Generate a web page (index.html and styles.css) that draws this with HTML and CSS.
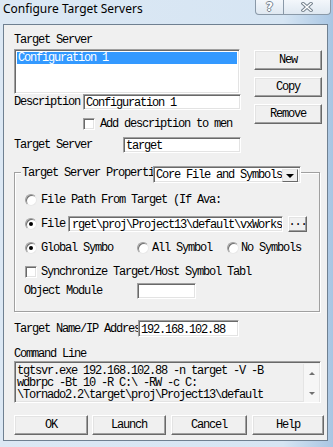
FILE: index.html
```html
<!DOCTYPE html>
<html lang="en">
<head>
    <meta charset="UTF-8">
    <title>Configure Target Servers</title>
    <link rel="stylesheet" href="styles.css">
</head>
<body>

    <div class="titlebar">
        <span class="title">Configure Target Servers</span>
        <div class="caption">
            <span class="cap-btn cap-help">?</span>
            <span class="cap-btn cap-close">
                <svg width="12" height="10" viewBox="0 0 12 10">
                    <path d="M2 1.5 L10 8.5 M10 1.5 L2 8.5" stroke="#76838f" stroke-width="3.4" stroke-linecap="square" fill="none"/>
                    <path d="M2 1.5 L10 8.5 M10 1.5 L2 8.5" stroke="#fff" stroke-width="1.4" stroke-linecap="square" fill="none"/>
                </svg>
            </span>
        </div>
    </div>

    <div class="client">
        <div class="text-line">Target Server</div>

        <div class="top">
            <div class="top-left">
                <div class="listbox sunken">
                    <div class="list-item selected">Configuration 1</div>
                </div>
                <div class="row">
                    <span class="lbl lbl-desc">Description</span>
                    <div class="field sunken field-desc">Configuration 1</div>
                </div>
                <div class="row row-check">
                    <span class="checkbox sunken"></span>
                    <span class="check-text">Add description to men</span>
                </div>
                <div class="row row-server">
                    <span class="lbl lbl-server">Target Server</span>
                    <div class="field sunken field-server">target</div>
                </div>
            </div>
            <div class="side-btns">
                <button class="btn btn-side">New</button>
                <button class="btn btn-side">Copy</button>
                <button class="btn btn-side">Remove</button>
            </div>
        </div>

        <div class="group">
            <div class="group-head">
                <span class="group-title">Target Server Properti</span>
                <div class="combo sunken">
                    <span class="combo-text">Core File and Symbols</span>
                    <span class="combo-btn"><span class="arrow-down"></span></span>
                </div>
            </div>

            <div class="opt-row opt-first">
                <span class="radio"></span>
                <span class="opt-text opt-path">File Path From Target (If Ava:</span>
            </div>
            <div class="opt-row">
                <span class="radio on"></span>
                <span class="opt-text opt-file">File</span>
                <div class="field sunken field-file">rget\proj\Project13\default\vxWorks</div>
                <button class="btn btn-dots">...</button>
            </div>
            <div class="opt-row">
                <span class="radio on"></span>
                <span class="opt-text opt-global">Global Symbo</span>
                <span class="radio"></span>
                <span class="opt-text opt-all">All Symbol</span>
                <span class="radio"></span>
                <span class="opt-text opt-none">No Symbols</span>
            </div>
            <div class="opt-row">
                <span class="checkbox sunken"></span>
                <span class="opt-text opt-sync">Synchronize Target/Host Symbol Tabl</span>
            </div>
            <div class="opt-row opt-module">
                <span class="lbl lbl-module">Object Module</span>
                <div class="field sunken field-module"></div>
            </div>
        </div>

        <div class="row row-ip">
            <span class="lbl lbl-ip">Target Name/IP Addres</span>
            <div class="field sunken field-ip">192.168.102.88</div>
        </div>

        <div class="text-line cmd-label">Command Line</div>
        <div class="cmd sunken">
            <div class="cmd-text">tgtsvr.exe 192.168.102.88 -n target -V -B
wdbrpc -Bt 10 -R C:\ -RW -c C:
\Tornado2.2\target\proj\Project13\default</div>
            <div class="vscroll">
                <span class="sb-arrow sb-up"></span>
                <span class="sb-arrow sb-down"></span>
            </div>
        </div>

        <div class="actions">
            <button class="btn btn-ok">OK</button>
            <button class="btn btn-launch">Launch</button>
            <button class="btn btn-cancel">Cancel</button>
            <button class="btn btn-help">Help</button>
        </div>
    </div>

</body>
</html>
```

FILE: styles.css
```css
body {
    margin: 0;
    width: 333px;
    height: 447px;
    overflow: hidden;
    background: linear-gradient(to right, #dce8f4 0%, #d6e5f3 85%, #a9c6e3 100%);
    font-family: "Liberation Mono", monospace;
    font-size: 12px;
    letter-spacing: -1.2px;
    color: #000;
}

/* title bar */
.titlebar {
    height: 24px;
    display: flex;
    justify-content: space-between;
    align-items: flex-start;
}

.title {
    font-family: "Noto Sans", sans-serif;
    font-size: 12px;
    letter-spacing: 0;
    line-height: 16px;
    padding: 1px 0 0 3px;
}

.caption {
    display: flex;
    height: 14px;
    margin-right: 2px;
    border: 1px solid #8a99a8;
    border-top: 0;
    border-radius: 0 0 4px 4px;
    background: linear-gradient(#f3f7fb, #dfe8f1);
}

.cap-btn {
    display: flex;
    align-items: center;
    justify-content: center;
}

.cap-help {
    width: 27px;
    border-right: 1px solid #8a99a8;
    font-family: "DejaVu Sans", sans-serif;
    font-size: 12px;
    font-weight: bold;
    letter-spacing: 0;
    color: #fff;
    text-shadow: 1px 0 #76838f, -1px 0 #76838f, 0 1px #76838f, 0 -1px #76838f;
}

.cap-close {
    width: 46px;
}

/* dialog body */
.client {
    margin-left: 3px;
    width: 325px;
    height: 417px;
    box-sizing: border-box;
    border: 1px solid #6f8091;
    background: #f0f0f0;
    padding: 9px 0 0 10px;
}

.text-line {
    line-height: 12px;
    white-space: nowrap;
}

.sunken {
    box-sizing: border-box;
    border: 1px solid;
    border-color: #a0a0a0 #fff #fff #a0a0a0;
    box-shadow: inset 1px 1px #696969, inset -1px -1px #e3e3e3;
}

.btn {
    box-sizing: border-box;
    height: 20px;
    padding: 0;
    background: #f0f0f0;
    border: 1px solid;
    border-color: #fff #696969 #696969 #fff;
    box-shadow: inset -1px -1px #a0a0a0, inset 1px 1px #e3e3e3;
    font: inherit;
    letter-spacing: inherit;
    color: #000;
    display: flex;
    align-items: center;
    justify-content: center;
}

.row {
    display: flex;
    align-items: center;
    height: 16px;
}

.lbl {
    line-height: 12px;
    white-space: nowrap;
}

.field {
    height: 16px;
    background: #fff;
    padding: 2px 2px 0;
    line-height: 12px;
    white-space: nowrap;
    overflow: hidden;
}

/* top section */
.top {
    display: flex;
    margin-top: 3px;
}

.top-left {
    width: 227px;
}

.listbox {
    width: 226px;
    height: 45px;
    background: #fff;
    padding: 2px;
}

.list-item {
    height: 12px;
    line-height: 12px;
    padding-left: 1px;
}

.list-item.selected {
    background: #3399ff;
    color: #fff;
}

.lbl-desc {
    width: 69px;
}

.field-desc {
    width: 158px;
}

.row-check {
    height: 12px;
    margin-top: 8px;
    padding-left: 69px;
}

.checkbox {
    width: 12px;
    height: 12px;
    flex: none;
    background: #fff;
}

.check-text {
    margin-left: 5px;
    line-height: 12px;
    white-space: nowrap;
}

.row-server {
    margin-top: 7px;
}

.lbl-server {
    width: 109px;
}

.field-server {
    width: 118px;
}

.side-btns {
    display: flex;
    flex-direction: column;
    gap: 7px;
    margin: 1px 0 0 13px;
}

.btn-side {
    width: 68px;
}

/* properties group */
.group {
    width: 306px;
    box-sizing: border-box;
    margin-top: 19px;
    padding: 0 0 12px 10px;
    border: 1px solid #a0a0a0;
    box-shadow: inset 1px 1px #fff, 1px 1px #fff;
}

.group-head {
    display: flex;
    margin: -7px 0 0 -4px;
}

.group-title {
    width: 131px;
    padding: 1px 0 0 1px;
    line-height: 12px;
    height: 13px;
    background: #f0f0f0;
    white-space: nowrap;
}

.combo {
    display: flex;
    width: 148px;
    height: 17px;
    background: #fff;
    padding: 2px 2px 2px 1px;
}

.combo-text {
    flex: 1;
    padding-left: 1px;
    line-height: 13px;
    white-space: nowrap;
}

.combo-btn {
    box-sizing: border-box;
    width: 16px;
    height: 13px;
    flex: none;
    background: #f0f0f0;
    border: 1px solid;
    border-color: #e3e3e3 #696969 #696969 #e3e3e3;
    display: flex;
    align-items: center;
    justify-content: center;
}

.arrow-down {
    width: 0;
    height: 0;
    border-left: 4px solid transparent;
    border-right: 4px solid transparent;
    border-top: 4px solid #000;
}

.opt-row {
    display: flex;
    align-items: center;
    height: 16px;
    margin-top: 8px;
}

.opt-first {
    margin-top: 9px;
}

.opt-module {
    margin-top: 3px;
}

.radio {
    width: 12px;
    height: 12px;
    flex: none;
    box-sizing: border-box;
    border-radius: 50%;
    background: #fff;
    border: 1px solid;
    border-color: #a0a0a0 #e8e8e8 #e8e8e8 #a0a0a0;
    box-shadow: inset 1px 1px #707070;
    display: flex;
    align-items: center;
    justify-content: center;
}

.radio.on::after {
    content: "";
    width: 4px;
    height: 4px;
    border-radius: 50%;
    background: #000;
}

.opt-text {
    margin-left: 4px;
    line-height: 12px;
    white-space: nowrap;
}

.opt-path {
    width: 180px;
}

.opt-file {
    width: 27px;
}

.field-file {
    width: 215px;
    padding-left: 3px;
}

.btn-dots {
    width: 19px;
    height: 16px;
    margin-left: 5px;
    align-items: flex-end;
    padding-bottom: 2px;
}

.opt-global {
    width: 72px;
    margin-right: 24px;
}

.opt-all {
    width: 62px;
    margin-left: 3px;
    margin-right: 13px;
}

.opt-none {
    width: 60px;
    margin-left: 2px;
}

.opt-sync {
    width: 212px;
}

.lbl-module {
    width: 113px;
    margin-left: -1px;
}

.field-module {
    width: 59px;
}

/* lower section */
.row-ip {
    margin-top: 8px;
    height: 17px;
}

.lbl-ip {
    width: 124px;
}

.field-ip {
    width: 101px;
    height: 17px;
    padding-top: 3px;
}

.cmd-label {
    margin-top: 11px;
}

.cmd {
    display: flex;
    width: 307px;
    height: 42px;
    margin-top: 1px;
    background: #f0f0f0;
    padding: 2px 1px 0 2px;
}

.cmd-text {
    flex: 1;
    line-height: 12px;
    padding-top: 1px;
    white-space: pre;
}

.vscroll {
    width: 16px;
    height: 38px;
    background: #f6f6f6;
    border-left: 1px solid #e4e4e4;
    display: flex;
    flex-direction: column;
    justify-content: space-between;
    align-items: center;
    padding: 8px 0 7px;
    box-sizing: border-box;
}

.sb-arrow {
    width: 0;
    height: 0;
    border-left: 3px solid transparent;
    border-right: 3px solid transparent;
}

.sb-up {
    border-bottom: 3px solid #707070;
}

.sb-down {
    border-top: 3px solid #707070;
}

.actions {
    display: flex;
    margin-top: 12px;
}

.btn-ok {
    width: 74px;
}

.btn-launch {
    width: 74px;
    margin-left: 4px;
}

.btn-cancel {
    width: 76px;
    margin-left: 5px;
}

.btn-help {
    width: 72px;
    margin-left: 5px;
}
```
